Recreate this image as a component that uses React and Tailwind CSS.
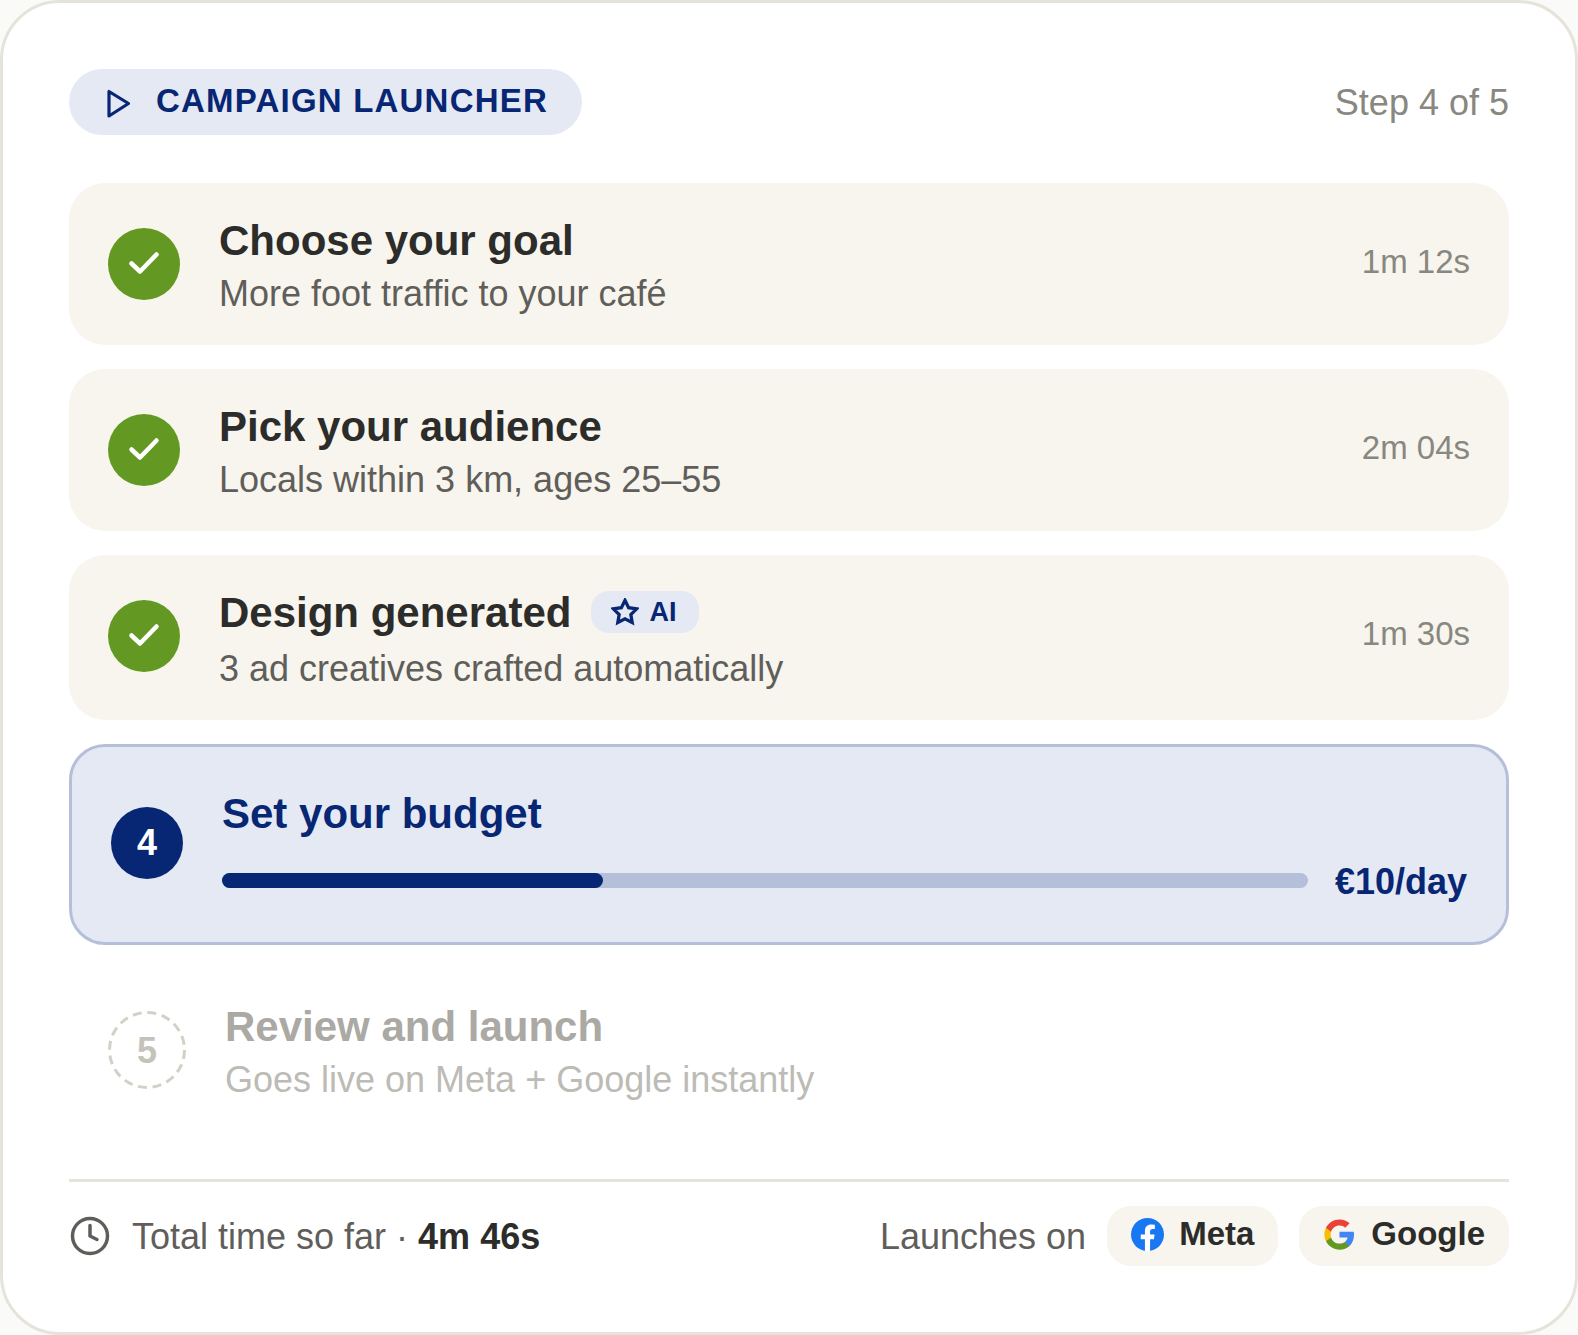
const doneSteps = [
  { title: 'Choose your goal', sub: 'More foot traffic to your café', time: '1m 12s' },
  { title: 'Pick your audience', sub: 'Locals within 3 km, ages 25–55', time: '2m 04s' },
  { title: 'Design generated', sub: '3 ad creatives crafted automatically', time: '1m 30s', ai: true },
];

const CheckCircle = () => (
  <div className="w-[72px] h-[72px] shrink-0 rounded-full bg-[#639922]">
    <svg viewBox="0 0 72 72" className="w-[72px] h-[72px]" fill="none" stroke="#fff" strokeWidth="4.5" strokeLinecap="round" strokeLinejoin="round">
      <path d="M23.5 35.5L32 43.5L48.5 26.5" />
    </svg>
  </div>
);

const AiBadge = () => (
  <span className="flex items-center gap-[10px] h-[42px] pl-[20px] pr-[23px] mt-[9px] rounded-[18px] bg-[#e5e9f4] text-[27px] font-bold text-[#072673]">
    <svg viewBox="0 0 24 24" className="w-[28px] h-[28px] shrink-0" fill="none" stroke="#072673" strokeWidth="2.8" strokeLinejoin="miter">
      <polygon points="12 2 15.09 8.26 22 9.27 17 14.14 18.18 21.02 12 17.77 5.82 21.02 7 14.14 2 9.27 8.91 8.26" />
    </svg>
    AI
  </span>
);

const DoneStep = ({ step }) => (
  <div className={`flex items-center gap-[39px] px-[39px] pt-[27px] rounded-[36px] bg-[#f7f5ed] ${step.ai ? 'pb-[30px]' : 'pb-[27px]'}`}>
    <CheckCircle />
    <div className="flex-1 min-w-0 h-[108px]">
      <div className={`flex items-start gap-[20px] ${step.ai ? 'h-[63px]' : 'h-[60px]'}`}>
        <span className="text-[42px] leading-[62px] font-bold text-[#2c2c2a]">{step.title}</span>
        {step.ai && <AiBadge />}
      </div>
      <div className="text-[36px] leading-[48px] text-[#5f5e5a]">{step.sub}</div>
    </div>
    <span className="pb-[4px] text-[33px] text-[#888780]">{step.time}</span>
  </div>
);

const FacebookIcon = () => (
  <svg viewBox="0 0 24 24" className="w-[33px] h-[33px] shrink-0">
    <circle cx="12" cy="12" r="12" fill="#1877f2" />
    <path fill="#fff" d="M16.671 15.543l.532-3.47h-3.328v-2.25c0-.949.465-1.874 1.956-1.874h1.513V4.996s-1.374-.235-2.686-.235c-2.741 0-4.533 1.662-4.533 4.669v2.643H7.078v3.47h3.047v8.385a12.1 12.1 0 0 0 3.75 0v-8.385z" />
  </svg>
);

const GoogleIcon = () => (
  <svg viewBox="0 0 24 24" className="w-[33px] h-[33px] shrink-0">
    <path fill="#4285f4" d="M22.56 12.25c0-.78-.07-1.53-.2-2.25H12v4.26h5.92c-.26 1.37-1.04 2.53-2.21 3.31v2.77h3.57c2.08-1.92 3.28-4.74 3.28-8.09z" />
    <path fill="#639922" d="M12 23c2.97 0 5.46-.98 7.28-2.66l-3.57-2.77c-.98.66-2.23 1.06-3.71 1.06-2.86 0-5.29-1.93-6.16-4.53H2.18v2.84C3.99 20.53 7.7 23 12 23z" />
    <path fill="#fbbc05" d="M5.84 14.09c-.22-.66-.35-1.36-.35-2.09s.13-1.43.35-2.09V7.07H2.18C1.43 8.55 1 10.22 1 12s.43 3.45 1.18 4.93l2.85-2.22.81-.62z" />
    <path fill="#ea4335" d="M12 5.38c1.62 0 3.06.56 4.21 1.64l3.15-3.15C17.45 2.09 14.97 1 12 1 7.7 1 3.99 3.47 2.18 7.07l3.66 2.84c.87-2.6 3.3-4.53 6.16-4.53z" />
  </svg>
);

const Chip = ({ icon, label }) => (
  <div className="flex items-center gap-[15px] h-[60px] px-[24px] pb-[4px] rounded-[24px] bg-[#f7f5ed] text-[33px] font-bold text-[#2c2c2a]">
    {icon}
    <span>{label}</span>
  </div>
);

export default function App() {
  return (
    <div className="min-h-screen bg-[#fafaf9] font-['Liberation_Sans',Arial,sans-serif]">
      <div className="flex flex-col p-[66px] rounded-[60px] border-[3px] border-[#e5e3da] bg-white">
        {/* Header */}
        <div className="flex items-center justify-between mb-[48px]">
          <div className="flex items-center gap-[15px] h-[66px] pl-[36px] pr-[34px] rounded-full bg-[#e5e9f4]">
            <svg viewBox="0 0 36 36" className="w-[36px] h-[36px]" fill="none" stroke="#072673" strokeWidth="3.2" strokeLinejoin="round">
              <path d="M4 7.5V32L23.5 19.5Z" />
            </svg>
            <span className="pb-[2px] text-[33px] font-bold tracking-[1.2px] text-[#072673]">CAMPAIGN LAUNCHER</span>
          </div>
          <span className="pt-[2px] text-[36px] text-[#888780]">Step 4 of 5</span>
        </div>

        {/* Steps */}
        <div className="flex flex-col gap-[24px]">
          {doneSteps.map((step) => (
            <DoneStep key={step.title} step={step} />
          ))}

          {/* Current step */}
          <div className="flex items-center gap-[39px] px-[39px] pt-[36px] pb-[41px] rounded-[36px] border-[3px] border-[#b6bfda] bg-[#e5e9f4]">
            <div className="flex items-center justify-center w-[72px] h-[72px] mt-[2px] shrink-0 rounded-full bg-[#072673] text-[36px] font-bold text-white">4</div>
            <div className="flex-1 min-w-0">
              <div className="h-[60px] text-[42px] leading-[62px] font-bold text-[#072673]">Set your budget</div>
              <div className="flex items-center gap-[27px] mt-[17px]">
                <div className="flex-1 h-[15px] rounded-full bg-[#b6bfda]">
                  <div className="h-full w-[35.1%] rounded-full bg-[#072673]" />
                </div>
                <span className="h-[41px] text-[36px] leading-[43px] font-bold text-[#072673]">€10/day</span>
              </div>
            </div>
          </div>

          {/* Upcoming step */}
          <div className="flex items-center gap-[39px] px-[39px] py-[27px]">
            <div className="relative flex items-center justify-center w-[78px] h-[78px] pt-[2px] shrink-0 text-[36px] font-bold text-[#c4c3bb]">
              <svg viewBox="0 0 78 78" className="absolute inset-0 w-[78px] h-[78px]" fill="none" stroke="#d3d1c7" strokeWidth="3" strokeDasharray="9 5.73">
                <circle cx="39" cy="39" r="37.5" />
              </svg>
              5
            </div>
            <div>
              <div className="h-[60px] text-[42px] leading-[62px] font-bold text-[#aaa9a3]">Review and launch</div>
              <div className="text-[36px] leading-[48px] text-[#bcbbb5]">Goes live on Meta + Google instantly</div>
            </div>
          </div>
        </div>

        {/* Footer */}
        <div className="flex items-center justify-between mt-[48px] pt-[24px] border-t-[3px] border-[#e5e3da]">
          <div className="flex items-center gap-[21px] text-[36px] text-[#5f5e5a]">
            <svg viewBox="0 0 24 24" className="w-[42px] h-[42px]" fill="none" stroke="#5f5e5a" strokeWidth="2" strokeLinecap="round" strokeLinejoin="round">
              <circle cx="12" cy="12" r="10" />
              <path d="M12 6v6l4 2" />
            </svg>
            <span className="pt-[1px]">Total time so far · <span className="font-bold text-[#2c2c2a]">4m 46s</span></span>
          </div>
          <div className="flex items-center gap-[21px]">
            <span className="pt-[1px] text-[36px] text-[#5f5e5a]">Launches on</span>
            <Chip icon={<FacebookIcon />} label="Meta" />
            <Chip icon={<GoogleIcon />} label="Google" />
          </div>
        </div>
      </div>
    </div>
  );
}
